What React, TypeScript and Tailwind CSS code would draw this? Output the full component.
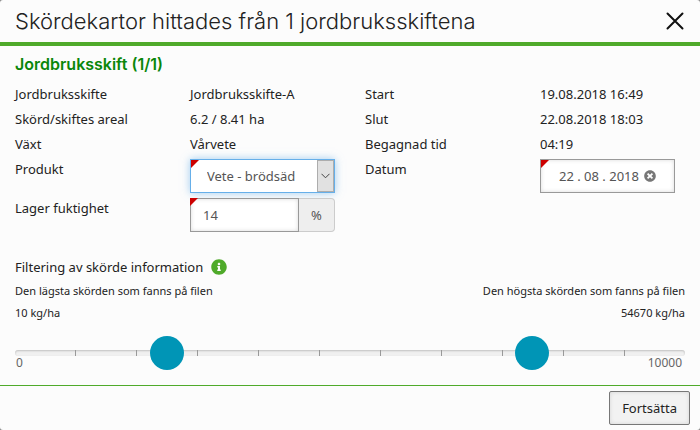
import { ReactNode, useState } from 'react';
import { FaInfoCircle, FaTimesCircle } from 'react-icons/fa';

const facts = [
  { label: 'Jordbruksskifte', value: 'Jordbruksskifte-A' },
  { label: 'Start', value: '19.08.2018 16:49' },
  { label: 'Skörd/skiftes areal', value: '6.2 / 8.41 ha' },
  { label: 'Slut', value: '22.08.2018 18:03' },
  { label: 'Växt', value: 'Vårvete' },
  { label: 'Begagnad tid', value: '04:19' },
];

const ticks = [1, 2, 3, 4, 5, 6, 7, 8, 9, 10];

const thumb =
  'pointer-events-none h-[34px] w-full appearance-none bg-transparent [grid-area:1/1] [&::-webkit-slider-thumb]:pointer-events-auto [&::-webkit-slider-thumb]:size-[34px] [&::-webkit-slider-thumb]:appearance-none [&::-webkit-slider-thumb]:rounded-full [&::-webkit-slider-thumb]:bg-[#0095b6]';

function Required({ children, className }: { children: ReactNode; className: string }) {
  return (
    <div className={`relative flex h-[34px] text-[#555] ${className}`}>
      {children}
      <span className="pointer-events-none absolute top-0 left-0 size-2 bg-[#c00] [clip-path:polygon(0_0,100%_0,0_100%)]" />
    </div>
  );
}

export default function App() {
  const [low, setLow] = useState(2123);
  const [high, setHigh] = useState(7860);

  return (
    <div className="bg-[#888]">
      <div className="rounded-[3px] bg-[#fcfcfc] font-['Noto_Sans',sans-serif] text-[13px] leading-5 text-[#222]">
        <header className="flex h-[46px] items-center justify-between border-b-4 border-[#4faa2a] pr-4 pl-[15px]">
          <h1 className="font-[Inter,sans-serif] text-[22px] font-light">
            Skördekartor hittades från 1 jordbruksskiftena
          </h1>
          <button aria-label="Stäng" className="p-0">
            <svg viewBox="0 0 18 18" className="size-[18px]" fill="none" stroke="#111" strokeWidth="2" strokeLinecap="round">
              <path d="M1.5 1.5 16.5 16.5M16.5 1.5 1.5 16.5" />
            </svg>
          </button>
        </header>

        <main>
          <h2 className="px-[15px] pt-2 pb-[10px] font-[Inter,sans-serif] text-[16px] font-semibold text-[#0a860a]">
            Jordbruksskift (1/1)
          </h2>

          <dl className="grid grid-cols-4 gap-y-[5px]">
            {facts.map((fact) => (
              <div key={fact.label} className="col-span-2 grid grid-cols-2">
                <dt className="px-[15px] whitespace-nowrap">{fact.label}</dt>
                <dd className="pl-[15px] whitespace-nowrap">{fact.value}</dd>
              </div>
            ))}
          </dl>

          <div className="mt-[5px] grid grid-cols-4 gap-y-[5px]">
            <label htmlFor="product" className="px-[15px]">Produkt</label>
            <div className="px-[15px]">
              <Required className="border border-[#66afe9] bg-white shadow-[0_0_8px_rgba(102,175,233,0.6)]">
                <select id="product" className="w-full appearance-none pl-4 outline-none">
                  <option>Vete - brödsäd</option>
                </select>
                <span className="pointer-events-none absolute inset-y-0 right-0 flex w-[17px] items-center justify-center border border-[#adadad] bg-[#e1e1e1]">
                  <svg viewBox="0 0 9 6" className="h-[6px] w-[9px]" fill="none" stroke="#444">
                    <path d="M.5 .8 4.5 4.8 8.5 .8" />
                  </svg>
                </span>
              </Required>
            </div>
            <label htmlFor="date" className="px-[15px]">Datum</label>
            <div className="pr-[25px] pl-[15px]">
              <Required className="items-center border border-[#999] bg-white pr-[18px] shadow-[inset_0_0_4px_rgba(0,0,0,0.15)]">
                <input id="date" defaultValue="22 . 08 . 2018" className="w-full min-w-0 pl-[18px] outline-none" />
                <button aria-label="Rensa datum">
                  <FaTimesCircle className="size-3 text-[#777]" />
                </button>
              </Required>
            </div>

            <label htmlFor="moisture" className="px-[15px]">Lager fuktighet</label>
            <div className="px-[15px]">
              <Required className="">
                <input
                  id="moisture"
                  defaultValue="14"
                  className="w-full min-w-0 border border-[#999] bg-white pl-3 shadow-[inset_0_0_4px_rgba(0,0,0,0.15)] outline-none"
                />
                <span className="flex w-9 shrink-0 items-center justify-center rounded-r border border-l-0 border-[#ccc] bg-[#eee]">%</span>
              </Required>
            </div>
          </div>

          <section className="px-[15px] pt-[25px]">
            <div className="flex items-center gap-2">
              <h3>Filtering av skörde information</h3>
              <FaInfoCircle className="size-4 text-[#4faa2a]" />
            </div>
            <div className="mt-[3px] flex justify-between text-[11px] leading-[22px]">
              <p>Den lägsta skörden som fanns på filen<br />10 kg/ha</p>
              <p className="text-right">Den högsta skörden som fanns på filen<br />54670 kg/ha</p>
            </div>

            <div className="mt-3 grid items-center">
              <div className="flex h-[6px] justify-evenly rounded-[3px] bg-[#f0f0f0] shadow-[inset_0_1px_2px_rgba(0,0,0,0.2)] [grid-area:1/1]">
                {ticks.map((tick) => (
                  <span key={tick} className="w-px bg-[#999]" />
                ))}
              </div>
              <input type="range" aria-label="Lägsta skörd" min="0" max="10000" value={low} onChange={(e) => setLow(Number(e.target.value))} className={thumb} />
              <input type="range" aria-label="Högsta skörd" min="0" max="10000" value={high} onChange={(e) => setHigh(Number(e.target.value))} className={thumb} />
            </div>
            <div className="-mt-[14px] flex justify-between pr-[3px] pl-px text-[12px] leading-[13px] text-[#666]">
              <span>0</span>
              <span>10000</span>
            </div>
          </section>
        </main>

        <footer className="mt-[16px] flex justify-end border-t border-[#4faa2a] px-[10px] pt-[5px] pb-[5px]">
          <button className="h-[34px] rounded-xs border border-[#777] bg-[#f2f2f2] px-3 shadow-[inset_0_0_4px_rgba(0,0,0,0.12)]">
            Fortsätta
          </button>
        </footer>
      </div>
    </div>
  );
}
